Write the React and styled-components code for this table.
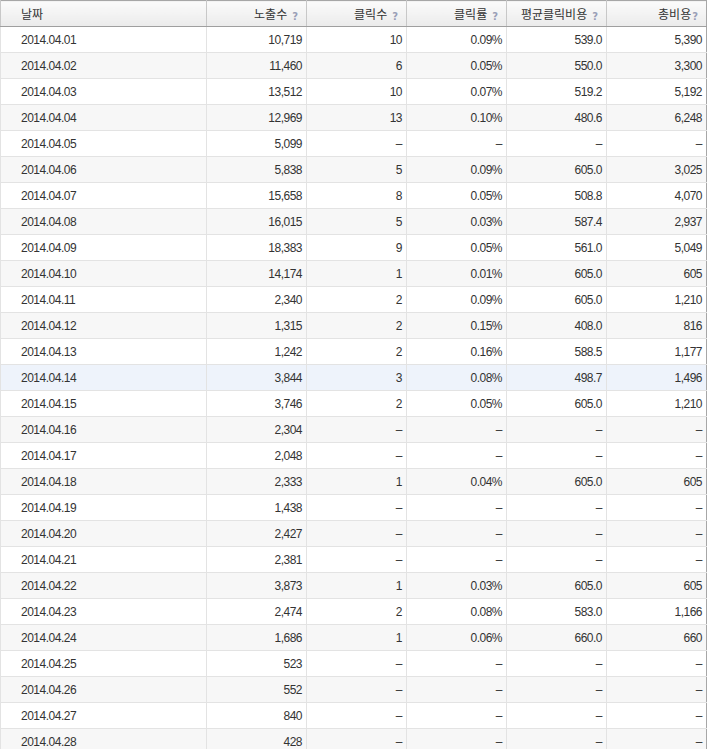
import React from 'react';
import styled, {createGlobalStyle} from 'styled-components';

const GlobalStyle = createGlobalStyle`
    body {
        margin: 0;
        background: #fff;
        font-family: "Noto Sans CJK KR", "Liberation Sans", sans-serif;
    }
`;

const Table = styled.table`
    width: 707px;
    border-collapse: collapse;
    table-layout: fixed;
    border-left: 1px solid #a7a7a7;
    border-right: 1px solid #a7a7a7;
    border-top: 1px solid #a7a7a7;
    font-size: 12px;
    color: #333;
`, HeadCell = styled.th`
    width: ${p => (p.$first ? '206px' : '100px')};
    height: 26px;
    box-sizing: border-box;
    padding: ${p => (p.$first ? '0 0 0 20px' : '0 8px 0 0')};
    text-align: ${p => (p.$first ? 'left' : 'right')};
    font-weight: normal;
    background: linear-gradient(#fbfbfb, #ebebeb);
    border-left: 1px solid #c8c8c8;
    border-bottom: 1px solid #9f9f9f;
    white-space: nowrap;
`, Help = styled.span`
    display: inline-block;
    margin-left: ${p => (p.$tight ? '1px' : '5px')};
    font-family: "DejaVu Sans", sans-serif;
    font-size: 10px;
    font-weight: bold;
    color: #9a9fb7;
    vertical-align: -1px;
`, Row = styled.tr`
    background: ${p => (p.$active ? '#eef3fb' : p.$odd ? '#f7f7f7' : '#fff')};
`, Cell = styled.td`
    height: 25px;
    padding: ${p => (p.$first ? '0 0 0 20px' : '0 4px 0 0')};
    text-align: ${p => (p.$first ? 'left' : 'right')};
    border-left: 1px solid #e3e3e3;
    border-bottom: 1px solid #e3e3e3;
    white-space: nowrap;
    font-family: "Liberation Sans", sans-serif;
    letter-spacing: -0.5px;
`;

const columns = ['노출수', '클릭수', '클릭률', '평균클릭비용', '총비용'];

const rows = [
    ['2014.04.01', '10,719', '10', '0.09%', '539.0', '5,390'],
    ['2014.04.02', '11,460', '6', '0.05%', '550.0', '3,300'],
    ['2014.04.03', '13,512', '10', '0.07%', '519.2', '5,192'],
    ['2014.04.04', '12,969', '13', '0.10%', '480.6', '6,248'],
    ['2014.04.05', '5,099', '-', '-', '-', '-'],
    ['2014.04.06', '5,838', '5', '0.09%', '605.0', '3,025'],
    ['2014.04.07', '15,658', '8', '0.05%', '508.8', '4,070'],
    ['2014.04.08', '16,015', '5', '0.03%', '587.4', '2,937'],
    ['2014.04.09', '18,383', '9', '0.05%', '561.0', '5,049'],
    ['2014.04.10', '14,174', '1', '0.01%', '605.0', '605'],
    ['2014.04.11', '2,340', '2', '0.09%', '605.0', '1,210'],
    ['2014.04.12', '1,315', '2', '0.15%', '408.0', '816'],
    ['2014.04.13', '1,242', '2', '0.16%', '588.5', '1,177'],
    ['2014.04.14', '3,844', '3', '0.08%', '498.7', '1,496'],
    ['2014.04.15', '3,746', '2', '0.05%', '605.0', '1,210'],
    ['2014.04.16', '2,304', '-', '-', '-', '-'],
    ['2014.04.17', '2,048', '-', '-', '-', '-'],
    ['2014.04.18', '2,333', '1', '0.04%', '605.0', '605'],
    ['2014.04.19', '1,438', '-', '-', '-', '-'],
    ['2014.04.20', '2,427', '-', '-', '-', '-'],
    ['2014.04.21', '2,381', '-', '-', '-', '-'],
    ['2014.04.22', '3,873', '1', '0.03%', '605.0', '605'],
    ['2014.04.23', '2,474', '2', '0.08%', '583.0', '1,166'],
    ['2014.04.24', '1,686', '1', '0.06%', '660.0', '660'],
    ['2014.04.25', '523', '-', '-', '-', '-'],
    ['2014.04.26', '552', '-', '-', '-', '-'],
    ['2014.04.27', '840', '-', '-', '-', '-'],
    ['2014.04.28', '428', '-', '-', '-', '-'],
];

export default function App() {
    return (
        <>
            <GlobalStyle/>
            <Table>
                <thead>
                    <tr>
                        <HeadCell $first>날짜</HeadCell>
                        {columns.map((c, i) => (
                            <HeadCell key={c}>
                                {c}<Help $tight={i === columns.length - 1}>?</Help>
                            </HeadCell>
                        ))}
                    </tr>
                </thead>
                <tbody>
                    {rows.map((r, i) => (
                        <Row key={r[0]} $odd={i % 2 === 1} $active={i === 13}>
                            {r.map((v, j) => (
                                <Cell key={j} $first={j === 0}>
                                    {v === '-' ? '\u2013' : v}
                                </Cell>
                            ))}
                        </Row>
                    ))}
                </tbody>
            </Table>
        </>
    );
}
